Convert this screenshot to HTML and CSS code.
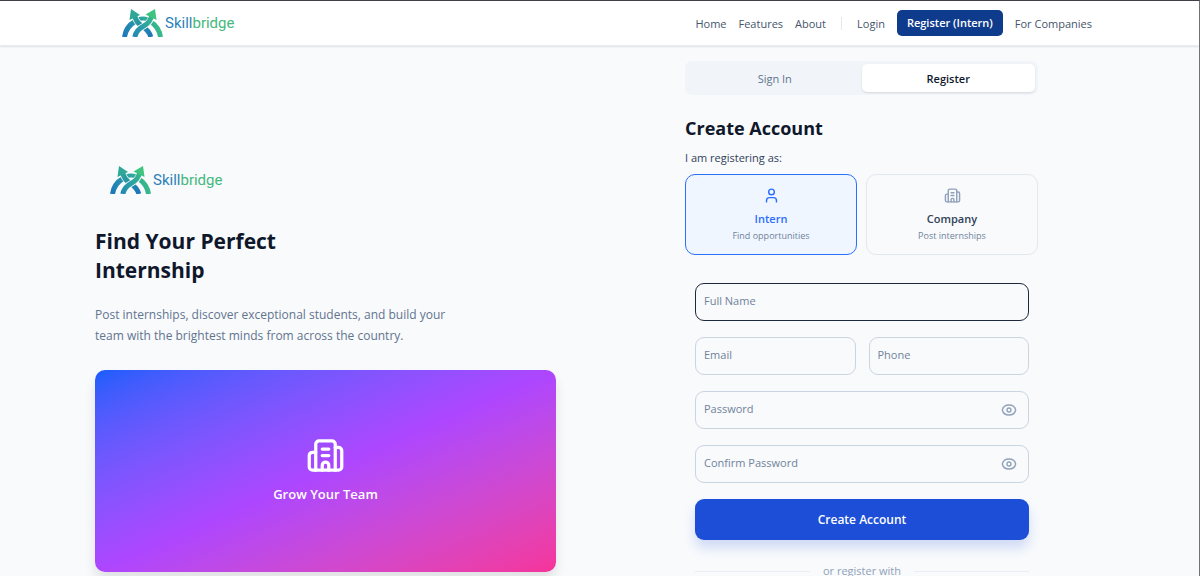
FILE: index.html
```html
<!DOCTYPE html>
<html lang="en">
<head>
  <meta charset="UTF-8" />
  <meta name="viewport" content="width=device-width, initial-scale=1.0"/>
  <title>Skillbridge - Create Account</title>
  <link rel="stylesheet" href="styles.css">
</head>
<body>

<!-- Shared icons -->
<svg class="sprite" aria-hidden="true">
  <defs>
    <linearGradient id="markGradient" gradientUnits="userSpaceOnUse" x1="0" y1="26" x2="40" y2="8">
      <stop offset="0" stop-color="#1c75bc"/>
      <stop offset="0.5" stop-color="#2a9fa8"/>
      <stop offset="1" stop-color="#3fc878"/>
    </linearGradient>
    <linearGradient id="downGradient" gradientUnits="userSpaceOnUse" x1="10" y1="2" x2="29" y2="28">
      <stop offset="0" stop-color="#2fae8e"/>
      <stop offset="1" stop-color="#1c75bc"/>
    </linearGradient>
  </defs>
  <symbol id="icon-mark" viewBox="0 0 41 28">
    <g fill="none" stroke="url(#markGradient)" stroke-width="5">
      <path d="M2.500 28C3.500 21 7 16 13 12.500"/>
      <path d="M38.500 28C37.500 21 34.500 16.500 29 13"/>
      <path d="M16 10.500Q21 8.500 26 10.500" stroke-width="4"/>
    </g>
    <path class="mark-gap" d="M12.500 6C13.500 12 16 14.500 20 17C24.500 20 27.500 23 28.800 28" fill="none" stroke-width="6.500"/>
    <path d="M12.500 6C13.500 12 16 14.500 20 17C24.500 20 27.500 23 28.800 28" fill="none" stroke="url(#downGradient)" stroke-width="5"/>
    <path d="M9 0L18 6L7.500 11Z" fill="#2fa796"/>
    <path class="mark-gap" d="M15 22.500C16.500 20 18.500 18.500 21 17.500C26 15 28.500 12 29.800 8" fill="none" stroke-width="6.500"/>
    <path d="M12.800 28C14 22.500 17 19.500 21 17.500C26 15 29 12 30 5" fill="none" stroke="url(#markGradient)" stroke-width="5"/>
    <path d="M33 0L23.500 5.500L34.500 11Z" fill="#3fc380"/>
  </symbol>
  <symbol id="icon-building" viewBox="0 0 24 24">
    <g fill="none" stroke="currentColor" stroke-width="2" stroke-linecap="round" stroke-linejoin="round">
      <path d="M10 12h4"/>
      <path d="M10 8h4"/>
      <path d="M14 21v-3a2 2 0 0 0-4 0v3"/>
      <path d="M6 10H4a2 2 0 0 0-2 2v7a2 2 0 0 0 2 2h16a2 2 0 0 0 2-2V9a2 2 0 0 0-2-2h-2"/>
      <path d="M6 21V5a2 2 0 0 1 2-2h8a2 2 0 0 1 2 2v16"/>
    </g>
  </symbol>
  <symbol id="icon-user" viewBox="0 0 24 24">
    <g fill="none" stroke="currentColor" stroke-width="2" stroke-linecap="round" stroke-linejoin="round">
      <path d="M19 21v-2a4 4 0 0 0-4-4H9a4 4 0 0 0-4 4v2"/>
      <circle cx="12" cy="7" r="4"/>
    </g>
  </symbol>
  <symbol id="icon-eye" viewBox="0 0 24 24">
    <g fill="none" stroke="currentColor" stroke-width="2" stroke-linecap="round" stroke-linejoin="round">
      <path d="M2 12C3 7.500 7 4.500 12 4.500S21 7.500 22 12C21 16.500 17 19.500 12 19.500S3 16.500 2 12Z"/>
      <circle cx="12" cy="12" r="3"/>
    </g>
  </symbol>
</svg>

<header class="header">
  <a href="#" class="logo">
    <svg class="logo-mark"><use href="#icon-mark"/></svg>
    <span class="logo-text">Skill<span class="logo-green">bridge</span></span>
  </a>
  <nav class="nav">
    <a href="#">Home</a>
    <a href="#">Features</a>
    <a href="#">About</a>
    <span class="nav-divider"></span>
    <a href="#">Login</a>
    <a href="#" class="nav-register">Register (Intern)</a>
    <a href="#">For Companies</a>
  </nav>
</header>

<main class="main">
  <section class="intro">
    <a href="#" class="logo intro-logo">
      <svg class="logo-mark"><use href="#icon-mark"/></svg>
      <span class="logo-text">Skill<span class="logo-green">bridge</span></span>
    </a>
    <h1>Find Your Perfect<br>Internship</h1>
    <p class="intro-text">Post internships, discover exceptional students, and build your team with the brightest minds from across the country.</p>
    <div class="banner">
      <svg class="banner-icon"><use href="#icon-building"/></svg>
      <p>Grow Your Team</p>
    </div>
  </section>

  <section class="account">
    <div class="tabs">
      <button type="button" class="tab">Sign In</button>
      <button type="button" class="tab active">Register</button>
    </div>

    <h2>Create Account</h2>
    <p class="role-title">I am registering as:</p>
    <div class="roles">
      <button type="button" class="role selected">
        <svg class="role-icon"><use href="#icon-user"/></svg>
        <span class="role-name">Intern</span>
        <span class="role-note">Find opportunities</span>
      </button>
      <button type="button" class="role">
        <svg class="role-icon"><use href="#icon-building"/></svg>
        <span class="role-name">Company</span>
        <span class="role-note">Post internships</span>
      </button>
    </div>

    <form class="form">
      <div class="field focused">
        <input type="text" id="fullName"/>
        <label for="fullName">Full Name</label>
      </div>
      <div class="field-row">
        <div class="field">
          <input type="email" id="email"/>
          <label for="email">Email</label>
        </div>
        <div class="field">
          <input type="tel" id="phone"/>
          <label for="phone">Phone</label>
        </div>
      </div>
      <div class="field">
        <input type="password" id="password"/>
        <label for="password">Password</label>
        <button type="button" class="toggle" aria-label="Show password"><svg><use href="#icon-eye"/></svg></button>
      </div>
      <div class="field">
        <input type="password" id="confirmPassword"/>
        <label for="confirmPassword">Confirm Password</label>
        <button type="button" class="toggle" aria-label="Show password"><svg><use href="#icon-eye"/></svg></button>
      </div>
      <button type="submit" class="btn-submit">Create Account</button>
      <div class="separator">or register with</div>
    </form>
  </section>
</main>

</body>
</html>
```

FILE: styles.css
```css
* {
  box-sizing: border-box;
}

body {
  margin: 0;
  font-family: "Open Sans", "Noto Sans", sans-serif;
  font-size: 11px;
  color: #0f172b;
  background: #f8fafc;
  border-top: 1px solid #3f3f46;
  border-right: 1px solid #71717a;
}

h1, h2, p {
  margin: 0;
}

a {
  color: inherit;
  text-decoration: none;
}

button {
  font-family: inherit;
  border: none;
  cursor: pointer;
}

.sprite {
  position: absolute;
  width: 0;
  height: 0;
}

/* Header */
.header {
  display: flex;
  align-items: center;
  justify-content: space-between;
  height: 45px;
  padding: 0 107px 0 122px;
  background: white;
  border-bottom: 1px solid #e8ecf1;
  box-shadow: 0 1px 2px rgba(0,0,0,0.1);
}

.logo {
  display: flex;
  align-items: center;
  gap: 2px;
}

.logo-mark {
  width: 41px;
  height: 28px;
}

.mark-gap {
  stroke: #f8fafc;
}

.logo-text {
  font-family: Roboto, sans-serif;
  font-size: 15px;
  font-weight: 400;
  color: #2b7fb8;
}

.logo-green {
  color: #45b97c;
}

.nav {
  display: flex;
  align-items: center;
  gap: 12px;
  font-weight: 500;
  color: #45556c;
}

.nav-divider {
  width: 1px;
  height: 13px;
  margin: 0 3px;
  background: #e2e8f0;
}

.nav-register {
  padding: 0 10px;
  line-height: 26px;
  font-weight: 600;
  color: white;
  background: #0f3b8c;
  border-radius: 5px;
}

/* Two columns */
.main {
  display: grid;
  grid-template-columns: 461fr 353fr;
  gap: 129px;
  padding: 15px 161px 0 95px;
}

.intro {
  padding-top: 105px;
}

.intro-logo {
  padding-left: 15px;
}

h1 {
  margin-top: 33px;
  font-size: 21px;
  line-height: 29px;
  font-weight: 700;
}

.intro-text {
  max-width: 360px;
  margin: 19px 0 24px;
  font-size: 12px;
  line-height: 21px;
  color: #62748e;
}

.banner {
  display: flex;
  flex-direction: column;
  align-items: center;
  justify-content: center;
  gap: 10px;
  height: 202px;
  padding-bottom: 4px;
  color: white;
  background: linear-gradient(to bottom right in oklab, #155dfc, #ad46ff, #f6339a);
  border-radius: 10px;
  box-shadow: 0 8px 12px rgba(0,0,0,0.1);
}

.banner-icon {
  width: 39px;
  height: 39px;
}

.banner p {
  font-size: 13px;
  font-weight: 600;
}

/* Account panel */
.tabs {
  display: grid;
  grid-template-columns: 1fr 1fr;
  padding: 3px;
  background: #f1f5f9;
  border-radius: 7px;
}

.tab {
  height: 28px;
  padding: 0;
  font-size: 11px;
  font-weight: 500;
  color: #62748e;
  background: none;
  border-radius: 5px;
}

.tab.active {
  font-weight: 600;
  color: #0f172b;
  background: white;
  box-shadow: 0 1px 2px rgba(0,0,0,0.12);
}

h2 {
  margin-top: 20px;
  font-size: 18px;
  line-height: 26px;
  font-weight: 700;
}

.role-title {
  margin: 8px 0;
  line-height: 17px;
  font-weight: 500;
  color: #314158;
}

.roles {
  display: grid;
  grid-template-columns: 1fr 1fr;
  gap: 9px;
}

.role {
  display: flex;
  flex-direction: column;
  align-items: center;
  height: 81px;
  padding: 12px 0 0;
  color: #90a1b9;
  background: none;
  border: 1px solid #e2e8f0;
  border-radius: 10px;
}

.role.selected {
  color: #2b6fff;
  background: #eff6ff;
  border-color: #2b6fff;
}

.role-icon {
  width: 17px;
  height: 17px;
}

.role-name {
  margin-top: 6px;
  font-size: 11px;
  line-height: 17px;
  font-weight: 600;
  color: #314158;
}

.selected .role-name {
  color: #2b6fff;
}

.role-note {
  font-size: 9px;
  line-height: 17px;
  color: #71829b;
}

/* Form */
.form {
  display: flex;
  flex-direction: column;
  gap: 16px;
  padding: 28px 9px 0 10px;
}

.field {
  position: relative;
}

.field-row {
  display: grid;
  grid-template-columns: 1fr 1fr;
  gap: 13px;
}

.field input {
  display: block;
  width: 100%;
  height: 38px;
  padding: 0 9px;
  font-family: inherit;
  font-size: 11px;
  background: transparent;
  border: 1px solid #cad5e2;
  border-radius: 9px;
  outline: none;
}

.focused input {
  border-color: #1d293d;
}

.field label {
  position: absolute;
  left: 9px;
  top: 9px;
  line-height: 18px;
  color: #71829b;
  pointer-events: none;
}

.toggle {
  position: absolute;
  right: 12px;
  top: 11px;
  padding: 0;
  background: none;
  color: #90a1b9;
}

.toggle svg {
  display: block;
  width: 16px;
  height: 16px;
}

.btn-submit {
  height: 41px;
  font-size: 12px;
  font-weight: 600;
  color: white;
  background: #1d4ed8;
  border-radius: 9px;
  box-shadow: 0 8px 12px rgba(29,78,216,0.18);
}

.separator {
  display: flex;
  align-items: center;
  gap: 13px;
  margin-top: 6px;
  line-height: 18px;
  color: #90a1b9;
}

.separator::before,
.separator::after {
  content: "";
  flex: 1;
  height: 1px;
  background: #e8eef5;
}

@media (max-width: 800px) {
  .header,
  .main {
    padding-left: 20px;
    padding-right: 20px;
  }

  .main {
    grid-template-columns: 1fr;
    gap: 30px;
  }
}
```
